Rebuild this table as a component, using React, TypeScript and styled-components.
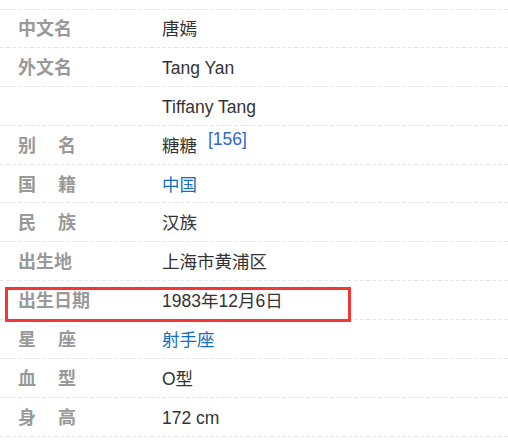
import React from "react";
import styled, { createGlobalStyle } from "styled-components";

type Item = {
  label: string[];
  value: string;
  link?: boolean;
  note?: string;
  marked?: boolean;
};

const items: Item[] = [
  { label: ["中文名"], value: "唐嫣" },
  { label: ["外文名"], value: "Tang Yan" },
  { label: [], value: "Tiffany Tang" },
  { label: ["别", "名"], value: "糖糖", note: "[156]" },
  { label: ["国", "籍"], value: "中国", link: true },
  { label: ["民", "族"], value: "汉族" },
  { label: ["出生地"], value: "上海市黄浦区" },
  { label: ["出生日期"], value: "1983年12月6日", marked: true },
  { label: ["星", "座"], value: "射手座", link: true },
  { label: ["血", "型"], value: "O型" },
  { label: ["身", "高"], value: "172 cm" },
];

const GlobalStyle = createGlobalStyle`
  body {
    margin: 0;
    background: #fff;
    font-family: "Liberation Sans", "Noto Sans CJK SC", sans-serif;
  }
`;

const InfoList = styled.dl`
  margin: 0;
  padding-top: 9px;
`;

const dashes = `repeating-linear-gradient(to right, #e6e6e6 0 4px, transparent 4px 6px)`;

const Row = styled.div<{ $first?: boolean }>`
  position: relative;
  display: grid;
  grid-template-columns: 144px 1fr;
  align-items: center;
  height: 38.9px;
  padding: 1px 0 0 18px;
  box-sizing: border-box;
  background-image: ${dashes}${(p) => (p.$first ? `, ${dashes}` : "")};
  background-repeat: no-repeat;
  background-size: 100% 1px${(p) => (p.$first ? ", 100% 1px" : "")};
  background-position: left bottom${(p) => (p.$first ? ", left top" : "")};
`;

const Label = styled.dt`
  display: flex;
  gap: 22px;
  color: #999;
  font-weight: bold;
  font-size: 18px;
  line-height: 24px;
`;

const Value = styled.dd`
  margin: 0;
  color: #333;
  font-size: 17.5px;
  line-height: 24px;
  white-space: nowrap;
`;

const Link = styled.a`
  color: #136ec2;
  text-decoration: none;
`;

const Note = styled.sup`
  margin-left: 11px;
  color: #3366cc;
  font-size: 17.5px;
  vertical-align: 7px;
  line-height: 0;
`;

const Marker = styled.span`
  position: absolute;
  left: 5px;
  top: 6px;
  width: 346px;
  height: 35px;
  border: 3px solid #f73535;
  box-sizing: border-box;
  pointer-events: none;
`;

export default function App() {
  return (
    <>
      <GlobalStyle />
      <InfoList>
        {items.map((item, i) => (
          <Row key={i} $first={i === 0}>
            <Label>
              {item.label.map((part) => (
                <span key={part}>{part}</span>
              ))}
            </Label>
            <Value>
              {item.link ? <Link href="#">{item.value}</Link> : item.value}
              {item.note && <Note>{item.note}</Note>}
            </Value>
            {item.marked && <Marker />}
          </Row>
        ))}
      </InfoList>
    </>
  );
}
